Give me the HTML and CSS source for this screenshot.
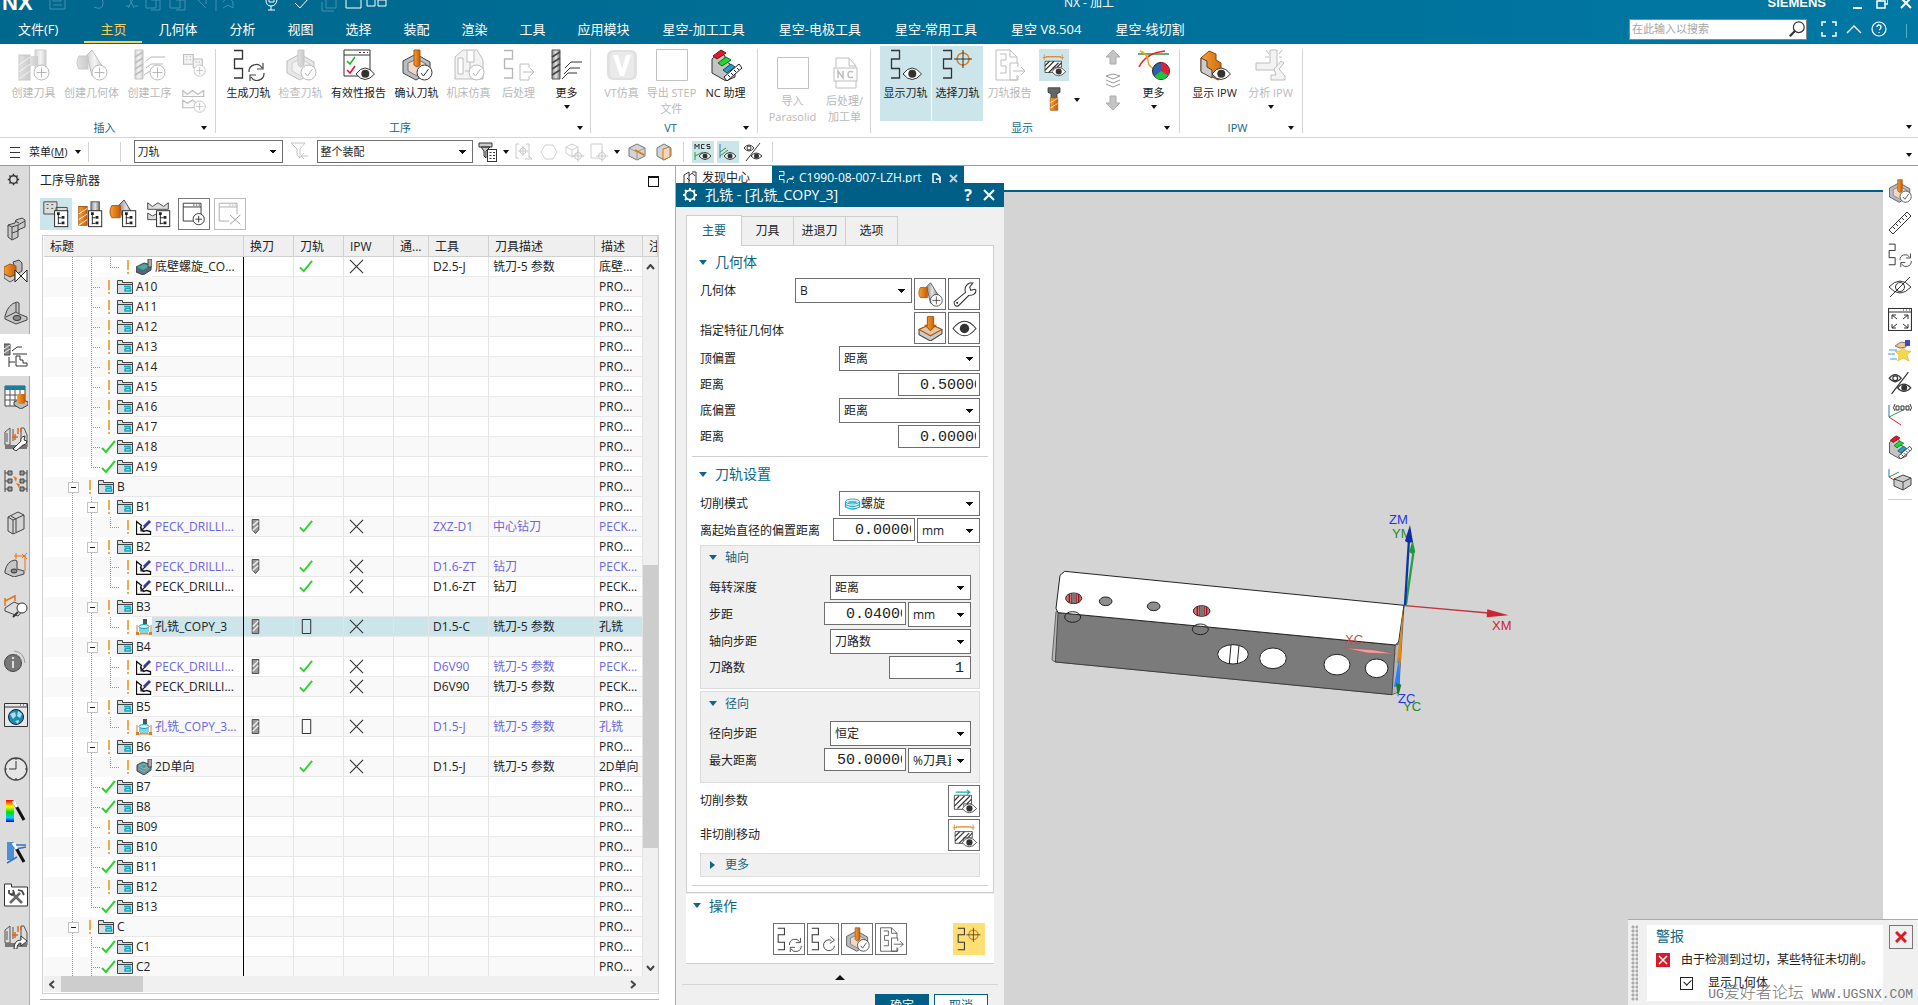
FILE: index.html
```html
<!DOCTYPE html>
<html lang="zh-CN">
<head>
<meta charset="utf-8">
<title>NX - 加工</title>
<link rel="stylesheet" href="styles.css">
</head>
<body>
<svg class="sprite" aria-hidden="true">
<defs>
<linearGradient id="steel"><stop offset="0" stop-color="#8a8a8a"/><stop offset=".5" stop-color="#e4e4e4"/><stop offset="1" stop-color="#777"/></linearGradient>
<linearGradient id="amber"><stop offset="0" stop-color="#f7a030"/><stop offset="1" stop-color="#c85c08"/></linearGradient>
<linearGradient id="rainbow" x2="0" y2="1"><stop offset="0" stop-color="red"/><stop offset=".3" stop-color="#ff0"/><stop offset=".55" stop-color="#0d0"/><stop offset=".8" stop-color="#0cf"/><stop offset="1" stop-color="#00f"/></linearGradient>
<g id="b-plus"><circle cx="23.500" cy="23.500" r="7.500" fill="#fff" stroke="#333"/><path d="M23.500 18.500v10M18.500 23.500h10" stroke="#333" fill="none"/></g>
<g id="b-check"><circle cx="23.500" cy="23.500" r="7.500" fill="#fff" stroke="#333"/><path d="M20 24l2.500 3 5-7" stroke="#333" fill="none"/></g>
<g id="b-eye"><path d="M13 25q9-12 18.500 0q-9.500 11-18.500 0z" fill="#fff" stroke="#333"/><circle cx="22.300" cy="24.800" r="4" fill="#333"/></g>
<g id="b-cycle"><path d="M16 23a7 7 0 0 1 13-4M30 14v6h-6M31 24a7 7 0 0 1-13 4M17 32v-6h6" fill="none" stroke="#444" stroke-width="1.200"/></g>
<g id="b-tree"><rect x="14.500" y="12.500" width="14" height="17" fill="#fff" stroke="#222"/><path d="M18.500 15v12M18 20h4M18 26h4" stroke="#222" fill="none"/><path d="M17 14h3v3h-3zM22 18h3v3h-3zM22 24h3v3h-3z" fill="#222"/></g>
<g id="wave"><path d="M1 1.500h8.500v8.500H1.500v9.500h8v9.500H1" fill="none" stroke="#333" stroke-width="1.300"/></g>
<g id="drill"><path d="M1 1h8v29H1z" fill="url(#steel)" stroke="#555"/><path d="M1 8l8-5M1 14l8-5M1 20l8-5M1 26l8-5" stroke="#444" stroke-width="1.500"/></g>
<g id="cone"><path d="M11 6l5-5 10 16-4 10h-6z" fill="url(#steel)" stroke="#444"/><path d="M3 7h9v13H3q-4-6 0-13z" fill="url(#amber)" stroke="#a8570f"/></g>
<g id="holebox"><path d="M2 12L15 5l14 8v10l-14 8-13-7z" fill="#b9bcc0" stroke="#444"/><path d="M7 14l9-4 9 5v6l-9 6-9-5z" fill="#f0d9c7" stroke="#777"/><path d="M13 1h6v15l-3 2-3-2z" fill="url(#amber)" stroke="#a8570f"/></g>
<g id="stairs"><path d="M2 10L10 3l5 4v5l5 3v4l5 3v6l-9 4-14-8z" fill="#c4c4c4" stroke="#333"/></g>
</defs>
<symbol id="i-tool" viewBox="0 0 32 32"><rect x="17" y="1" width="11" height="18" fill="url(#steel)" stroke="#777"/><rect x="1" y="6" width="11" height="25" fill="url(#amber)" stroke="#a8570f"/><path d="M1 16l11-8M1 23l11-8M1 30l11-8" stroke="#fff" opacity=".7"/><rect x="12" y="7" width="8" height="10" fill="url(#amber)"/><use href="#b-plus"/></symbol>
<symbol id="i-geom" viewBox="0 0 32 32"><use href="#cone"/><use href="#b-plus"/></symbol>
<symbol id="i-op" viewBox="0 0 32 32"><use href="#drill"/><path d="M12 12l5-4h14M12 19l5-4h12M10 26l6-4h12" fill="none" stroke="#333"/><use href="#b-plus"/></symbol>
<symbol id="i-prog" viewBox="0 0 32 32"><path d="M2 2h13v13H2zM15 8h12v12H15z" fill="#ddd" stroke="#444" stroke-width="1.500"/><path d="M5 5h2M10 5h2M5 9h2M10 9h2M18 12h2M22 12h2" stroke="#444" stroke-width="1.500"/><use href="#b-plus"/></symbol>
<symbol id="i-meth" viewBox="0 0 32 32"><path d="M1 2l6 5 7-5 7 5 8-5v8H1zM1 15l6 4 7-4 5 3v7H1z" fill="#eee" stroke="#444" stroke-width="1.500"/><use href="#b-plus"/></symbol>
<symbol id="i-gen" viewBox="0 0 32 32"><use href="#wave"/><use href="#b-cycle"/></symbol>
<symbol id="i-redo" viewBox="0 0 32 32"><use href="#wave"/><path d="M26 17a7 7 0 1 0 4 7M25 12l5 5-6 4" fill="none" stroke="#444" stroke-width="1.200"/></symbol>
<symbol id="i-chk" viewBox="0 0 32 32"><use href="#holebox"/><use href="#b-check"/></symbol>
<symbol id="i-report" viewBox="0 0 32 32"><path d="M1 1h26v26H1z" fill="#fff" stroke="#333"/><path d="M1 6h26M16 3.500h2M20 3.500h2M24 3.500h1" stroke="#333"/><path d="M4 12l3 3 5-7" fill="none" stroke="#18b828" stroke-width="1.500"/><path d="M4 21l3 3 5-7" fill="none" stroke="#e01038" stroke-width="1.500"/><use href="#b-eye"/></symbol>
<symbol id="i-mach" viewBox="0 0 32 32"><path d="M2 8L10 1h14l6 10v19H2z" fill="#ddd" stroke="#444"/><path d="M5 9h5v16H5zM14 2v11h7V2M17 13v8M12 22h14" fill="#fff" stroke="#444"/><use href="#b-check"/></symbol>
<symbol id="i-post" viewBox="0 0 32 32"><use href="#wave"/><path d="M17 15h9v4M26 27v4h-9V15M20 23h11l-4-4M31 23l-4 4" fill="none" stroke="#444"/></symbol>
<symbol id="i-more" viewBox="0 0 32 32"><use href="#drill"/><path d="M14 19l6-6h11M13 25l6-6h10M11 30l6-6h9" fill="none" stroke="#333"/></symbol>
<symbol id="i-vt" viewBox="0 0 32 32"><rect x="1" y="1" width="30" height="30" rx="6" fill="#a9a9a9"/><rect x="4" y="3" width="24" height="26" rx="4" fill="#c6c6c6"/><path d="M7 6h5l4 14 4-14h5l-7 21h-4z" fill="#fff"/></symbol>
<symbol id="i-blank" viewBox="0 0 32 32"><path d="M.5.500h31v31H.5z" fill="none" stroke="#555"/></symbol>
<symbol id="i-nc" viewBox="0 0 32 32"><use href="#stairs"/><path d="M3 7l8-6 5 3-9 6z" fill="#e01a2a" stroke="#7a0c15"/><path d="M8 14l8-6 5 3-9 6z" fill="#20d834" stroke="#0b6d18"/><path d="M13 21l8-6 4 3-8 6z" fill="#2a9cc4" stroke="#0c4c66"/><path d="M14 28L29 15l3 4-15 13z" fill="#fff" stroke="#222"/><path d="M18 26l2 2M21 24l2 2M24 21l2 2M27 19l2 2" stroke="#222"/></symbol>
<symbol id="i-ncdoc" viewBox="0 0 32 32"><path d="M7 10V1h13l7 8v1M7 24v7h20v-7M20 1v8h7" fill="none" stroke="#444"/><rect x="5" y="11" width="23" height="13" fill="#fff" stroke="#444"/><path d="M9 21v-7l5 7v-7M24 15q-5-2-5 2.500t5 2.500" fill="none" stroke="#444" stroke-width="1.500"/></symbol>
<symbol id="i-show" viewBox="0 0 32 32"><use href="#wave"/><use href="#b-eye"/></symbol>
<symbol id="i-pick" viewBox="0 0 32 32"><use href="#wave"/><circle cx="21" cy="10" r="6" fill="none" stroke="#d9801f" stroke-width="1.500"/><path d="M21 1v18M12 10h18" stroke="#333"/></symbol>
<symbol id="i-preport" viewBox="0 0 32 32"><path d="M2 1h14l7 7v6M23 26v5H2V1M16 1v7h7" fill="none" stroke="#444"/><path d="M6 5h6v6H7v6h5v7H6" fill="none" stroke="#444"/><path d="M16 14h8v4M24 27v4h-8V14M19 22h12l-4-4M31 22l-4 4" fill="none" stroke="#444"/></symbol>
<symbol id="i-hatch" viewBox="0 0 32 32"><path d="M5 5h20" stroke="#e0761a" stroke-width="1.500" fill="none"/><path d="M3 2v7M27 2v7M1 6h5M24 6h5" stroke="#e0761a"/><path d="M4 11h22v8H15v7H4z" fill="#fff" stroke="#333"/><path d="M4 17l6-6M4 23L16 11M9 26L22 13M20 19l6-6" stroke="#333" stroke-width="1.500"/><use href="#b-eye"/></symbol>
<symbol id="i-cutp" viewBox="0 0 32 32"><path d="M5 4h18M19 1l4 3-4 3" stroke="#1aa9a9" stroke-width="1.300" fill="none"/><path d="M3 8h22v11H15v7H3z" fill="#fff" stroke="#333"/><path d="M3 15l6-6M3 22L16 9M7 25L23 9M19 19l6-6" stroke="#333" stroke-width="1.500"/><use href="#b-eye"/></symbol>
<symbol id="i-bolt" viewBox="0 0 32 32"><path d="M8 1h16v6l-4 2v5h-8V9L8 7z" fill="#666" stroke="#333"/><path d="M11 14h10v17H11z" fill="url(#amber)" stroke="#a8570f"/><path d="M11 21l10-6M11 28l10-6" stroke="#fff"/></symbol>
<symbol id="i-up" viewBox="0 0 16 16"><path d="M8 1l7 7h-4v7H5V8H1z" fill="#c4c4c4" stroke="#aaa"/></symbol>
<symbol id="i-down" viewBox="0 0 16 16"><path d="M8 15L1 8h4V1h6v7h4z" fill="#c4c4c4" stroke="#aaa"/></symbol>
<symbol id="i-layers" viewBox="0 0 16 16"><path d="M1 4l7-2 7 2-7 3zM1 8l7 3 7-3M1 12l7 3 7-3" fill="none" stroke="#999"/></symbol>
<symbol id="i-chart" viewBox="0 0 32 32"><path d="M0 5h31" stroke="#2c9a3a" stroke-width="1.500"/><path d="M1 18Q8 4 27 2" stroke="#e02a2a" stroke-width="1.500" fill="none"/><path d="M2 2q8 3 8 10t12 10" stroke="#f0a020" stroke-width="1.500" fill="none"/><circle cx="23" cy="22" r="8.500" fill="#2a62a8" stroke="#222"/><path d="M23 22V13.500a8.500 8.500 0 0 1 7 13z" fill="#e02038"/><path d="M23 22l7 4.500a8.500 8.500 0 0 1-13.500 1z" fill="#1fc43c"/></symbol>
<symbol id="i-ipw" viewBox="0 0 32 32"><path d="M2 9l8-7 7 3v6l5 3v5l6 3v4l-9 5-17-9z" fill="url(#amber)" stroke="#8a4508"/><path d="M2 9l6 3v6l5 3v8L2 23z" fill="#ccc" stroke="#444"/><use href="#b-eye"/></symbol>
<symbol id="i-aipw" viewBox="0 0 32 32"><path d="M1 14h14V1h7v20H1zM11 1l3 4M27 1l-3 4M10 8h4M27 8h-3" fill="#ddd" stroke="#444"/><path d="M26 12l-7 8 2 6h-5v5h14v-4l-6-7 5-6z" fill="#ddd" stroke="#444"/></symbol>
<symbol id="i-funnel" viewBox="0 0 20 20"><path d="M1 1h14l-5 6v9l-3-3V7z" fill="none" stroke="#555"/><path d="M11 14h7M14 11l-3 3 3 3" fill="none" stroke="#555"/></symbol>
<symbol id="i-funnel2" viewBox="0 0 20 20"><path d="M1 1h13v4H1zM3 5h9l-4 4v7l-2-2V9z" fill="#ccc" stroke="#333"/><rect x="9.500" y="7.500" width="9" height="12" fill="#fff" stroke="#333"/><path d="M11.500 10.500h2M11.500 13.500h2M11.500 16.500h2M15 10.500h2M15 13.500h2M15 16.500h2" stroke="#333"/></symbol>
<symbol id="i-bracket" viewBox="0 0 20 20"><path d="M5 2H2v14h3M12 2h3v14M9 4v10M4 9h10M11 17h7M15 14l3 3" fill="none" stroke="#666"/><circle cx="9" cy="9" r="3" fill="none" stroke="#666"/></symbol>
<symbol id="i-hex" viewBox="0 0 20 20"><path d="M6 3h8l4 7-4 7H6l-4-7z" fill="none" stroke="#777"/></symbol>
<symbol id="i-cubet" viewBox="0 0 20 20"><path d="M2 5l6-3 6 3v6l-6 4-6-4zM2 5l6 3 6-3M8 8v6" fill="none" stroke="#777"/><circle cx="14" cy="14" r="3.500" fill="none" stroke="#666"/><path d="M14 8v12M8 14h12" stroke="#666"/></symbol>
<symbol id="i-rect" viewBox="0 0 20 20"><path d="M2 2h11v14H2z" fill="none" stroke="#777"/><circle cx="13" cy="14" r="3.500" fill="#fff" stroke="#666"/><path d="M13 8v12M7 14h12" stroke="#666"/></symbol>
<symbol id="i-box1" viewBox="0 0 20 20"><path d="M2 6l8-4 8 4v8l-8 4-8-4z" fill="#d4d4d4" stroke="#777"/><path d="M2 6l8 4 8-4M10 10v8" fill="none" stroke="#999"/><path d="M8 8l9 5" stroke="#e0761a" stroke-width="2"/></symbol>
<symbol id="i-box2" viewBox="0 0 20 20"><path d="M3 6l7-4 7 4v8l-7 4-7-4z" fill="#d4d4d4" stroke="#777"/><path d="M9 7l7-2v10l-7 3z" fill="#f5d7bb" stroke="#d9741a"/></symbol>
<symbol id="i-mcs" viewBox="0 0 20 20"><path d="M2 7V2l2 3 2-3v5M11.500 2.500h-3v4h3M17 2.500h-3v2h3v2h-3" fill="none" stroke="#333"/><path d="M2 10v8M2 14l8-4" stroke="#2c9a3a" fill="none"/><path d="M6 14q6-7 12 0q-6 7-12 0z" fill="#fff" stroke="#333"/><circle cx="12" cy="14" r="2.500" fill="#333"/></symbol>
<symbol id="i-wcs" viewBox="0 0 20 20"><path d="M2 2v14" stroke="#3b7fc4"/><path d="M2 14l8-6M2 10l6-4" stroke="#2c9a3a" fill="none"/><path d="M6 14q6-7 12 0q-6 7-12 0z" fill="#fff" stroke="#333"/><circle cx="12" cy="14" r="2.500" fill="#333"/></symbol>
<symbol id="i-eyes" viewBox="0 0 20 20"><path d="M1 6q5-6 10 0q-5 6-10 0zM17 1L3 19" fill="none" stroke="#333"/><circle cx="6" cy="6" r="2" fill="none" stroke="#333"/><path d="M8 14q5-6 11 0q-6 6-11 0z" fill="#fff" stroke="#333"/><circle cx="13.500" cy="14" r="2.500" fill="#333"/></symbol>
<symbol id="n-prog" viewBox="0 0 32 32"><path d="M3 3h14v13H3zM16 9h12v12H16z" fill="#ddd" stroke="#444"/><path d="M6 6h2M11 6h2M6 10h2M11 10h2" stroke="#444"/><use href="#b-tree"/></symbol>
<symbol id="n-tool" viewBox="0 0 32 32"><rect x="17" y="3" width="9" height="16" fill="url(#steel)" stroke="#555"/><rect x="4" y="8" width="9" height="20" fill="url(#amber)" stroke="#a8570f"/><path d="M4 16l9-6M4 22l9-6M4 28l9-6" stroke="#fff"/><use href="#b-tree"/></symbol>
<symbol id="n-geom" viewBox="0 0 32 32"><use href="#cone"/><use href="#b-tree"/></symbol>
<symbol id="n-meth" viewBox="0 0 32 32"><path d="M5 4l5 4 6-4 6 4 5-4v7H5zM5 15l5 3 6-3v7H5z" fill="#ddd" stroke="#444"/><use href="#b-tree"/></symbol>
<symbol id="n-new" viewBox="0 0 32 32"><path d="M4.500 4.500h19v19h-19zM4.500 8.500h19M15 6.500h1.500M18 6.500h1.500M21 6.500h1.500" fill="none" stroke="#333"/><circle cx="21" cy="21.500" r="6" fill="#fff" stroke="#333"/><path d="M21 18v7M17.500 21.500h7" stroke="#333"/></symbol>
<symbol id="n-del" viewBox="0 0 32 32"><path d="M4.500 4.500h19v19h-19zM4.500 8.500h19M15 6.500h1.500M18 6.500h1.500M21 6.500h1.500" fill="none" stroke="#aaa"/><path d="M15 16h12v12H15z" fill="#fff"/><path d="M16 17l11 10M27 17L16 27" stroke="#999"/></symbol>
<symbol id="warn" viewBox="0 0 16 16"><path d="M8 1v10M8 13v2" stroke="#f0aa48" stroke-width="2"/></symbol>
<symbol id="ok" viewBox="0 0 16 16"><path d="M1 9l4 4L14 2" fill="none" stroke="#2fd02f" stroke-width="2"/></symbol>
<symbol id="no" viewBox="0 0 16 16"><path d="M1 1l14 14M15 1L1 15" fill="none" stroke="#333" stroke-width="1.200"/></symbol>
<symbol id="none" viewBox="0 0 16 16"><path d="M3.500.500h9v15h-9z" fill="none" stroke="#222"/></symbol>
<symbol id="bit" viewBox="0 0 16 16"><path d="M4.500.500h7v15h-7z" fill="#999" stroke="#444"/><path d="M5 8l6-6M5 13l6-6" stroke="#eee" stroke-width="1.500"/></symbol>
<symbol id="bit2" viewBox="0 0 16 16"><path d="M4.500.500h7v11L8 15.500l-3.500-4z" fill="#999" stroke="#444"/><path d="M5 7l6-5M5 12l6-5" stroke="#eee" stroke-width="1.500"/></symbol>
<symbol id="fold" viewBox="0 0 16 16"><path d="M.5 1.500h5v2h10v11H.5z" fill="#d5dde2" stroke="#444"/><path d="M1 5.500h14" stroke="#444"/><path d="M7 7.500h6v2H8M8 9.500v2.500h5.500v-2" fill="none" stroke="#12a5bb" stroke-width="1.500"/></symbol>
<symbol id="peck" viewBox="0 0 16 16"><path d="M.5 2.500v13h14v-3l-4-1-3 1-3-4 1-2z" fill="#fff" stroke="#111" stroke-width="1.300"/><path d="M8 8l6-6" stroke="#3a3a98" stroke-width="3"/><path d="M5 8v4h4M5 12l4-4" fill="none" stroke="#223" stroke-width="1.200"/></symbol>
<symbol id="mill" viewBox="0 0 16 16"><path d="M1 6v9h14V6" fill="#fff" stroke="#e07c28"/><path d="M0 13h3v3H0zM13 13h3v3h-3z" fill="#e07c28"/><path d="M7 0h4v5H7z" fill="#555"/><ellipse cx="8" cy="7.500" rx="5" ry="2" fill="#d8f6f9" stroke="#12a5bb"/><path d="M3 10h10M3 12h10M4 14h8" stroke="#12a5bb"/></symbol>
<symbol id="floor" viewBox="0 0 16 16"><path d="M0 8l8-4 7 2v5l-8 5-7-3z" fill="#567" stroke="#444"/><path d="M1 8l7-3 6 2-7 4z" fill="#3eb0a0"/><path d="M12 0h4v8h-4z" fill="#aaa" stroke="#444"/></symbol>
<symbol id="plan" viewBox="0 0 16 16"><path d="M1 6l6-3 8 3v5l-7 5-7-4z" fill="#6b8b96" stroke="#444"/><path d="M3 7l5-2 4 2-4 3zM3 10l5 3 5-4" fill="none" stroke="#4fd0d8"/><path d="M8 10l4-2" stroke="#e8a05c"/><path d="M12 0h4v8h-4z" fill="#aaa" stroke="#444"/></symbol>
<symbol id="gear" viewBox="0 0 16 16"><circle cx="8" cy="8" r="4.700" fill="none" stroke="currentColor" stroke-width="1.800"/><path d="M8 1v2M8 13v2M1 8h2M13 8h2M3 3l1.500 1.500M11.500 11.500L13 13M13 3l-1.500 1.500M4.500 11.500L3 13" stroke="currentColor" stroke-width="1.800"/></symbol>
<symbol id="s-asm" viewBox="0 0 24 24"><path d="M4 8l7-2 1-3 6-2 3 2v7l-7 3v7l-6 3-4-3z" fill="#c9c9c9" stroke="#444"/><path d="M4 8l4 2v13M8 10l6-2 7-4M8 16l6-2M14 8v6M11 4l4 2" fill="none" stroke="#444"/></symbol>
<symbol id="s-cons" viewBox="0 0 24 24"><path d="M9 3l6-2 3 3v8l-5 3z" fill="#bbb" stroke="#444"/><path d="M0 8l6-3 6 2v8l-6 3-6-3z" fill="url(#amber)" stroke="#a8570f"/><path d="M0 15l6 3 5-2v4l-5 3-6-4z" fill="#ccc" stroke="#555"/><path d="M11 11l12 12V11L11 23z" fill="#fff" stroke="#222"/></symbol>
<symbol id="s-part" viewBox="0 0 24 24"><path d="M1 15Q4 3 13 1l2 1v11l8 3v3l-11 4-11-5z" fill="#c6c6c6" stroke="#444"/><path d="M12 2v9l-10 5M15 13l-3-2" fill="none" stroke="#444"/><ellipse cx="13" cy="17" rx="4" ry="2.500" fill="#888" stroke="#333"/></symbol>
<symbol id="s-opnav" viewBox="0 0 24 24"><path d="M0 1h6v11H0z" fill="#888" stroke="#444"/><path d="M0 6l6-4M0 10l6-4" stroke="#eee"/><path d="M8 8l5-4h5M9 11h14M5 14v10M5 19h6M12 23V13h4v4h3v3h4v3z" fill="none" stroke="#333"/></symbol>
<symbol id="s-feat" viewBox="0 0 24 24"><path d="M1 1h20v20H1z" fill="#fff" stroke="#444"/><path d="M1 1h20v4H1z" fill="#1a7f9e"/><path d="M1 10h20M1 15h20M6 5v16M11 5v16M16 5v16" stroke="#555"/><path d="M10 17l7-3 7 3v3l-7 4-7-4z" fill="#bbb" stroke="#444"/><path d="M13 9h8v9q-4 2-8 0z" fill="url(#amber)"/></symbol>
<symbol id="s-mtool" viewBox="0 0 24 24"><path d="M1 5l5-4v17H1zM17 1h3l3 7v12h-6z" fill="#ddd" stroke="#555"/><path d="M1 18h22v4H1z" fill="#777"/><path d="M3 6v9M9 2v12" stroke="#555"/><path d="M8 10h6M11 7v6M14 1v6M17 1v4" stroke="#e0661a" stroke-width="1.500"/><path d="M9 22l8-8q-1-4 4-5l-1 4 3 1q0 4-4 4l-7 6z" fill="#fff" stroke="#333"/></symbol>
<symbol id="s-dep" viewBox="0 0 24 24"><path d="M1 1v22M1 4h5M1 12h5M1 20h5M23 1v22M23 4h-5M23 12h-5M23 20h-5" stroke="#444"/><path d="M4 2h4v4H4zM4 10h4v4H4zM4 18h4v4H4zM16 2h4v4h-4zM16 10h4v4h-4zM16 18h4v4h-4z" fill="#999" stroke="#444"/><path d="M9 7l4 2-1 4zM12 14l4 1-1 4z" fill="#e0761a"/></symbol>
<symbol id="s-book" viewBox="0 0 24 24"><path d="M4 6l10-5 6 3v14L9 23l-5-3z" fill="#d4d4d4" stroke="#444"/><path d="M4 6l5 3v14M9 9l11-5M7 5l5 3v13" fill="none" stroke="#444"/></symbol>
<symbol id="s-pmi" viewBox="0 0 24 24"><path d="M1 18Q3 8 11 7l2 1v8l7 2v3l-10 3-9-4z" fill="#c6c6c6" stroke="#444"/><ellipse cx="10" cy="18" rx="3" ry="2" fill="#888" stroke="#333"/><path d="M10 3h12M21 3v15M12 0v6M18 1l5 5M23 0l-5 5" stroke="#e0761a" fill="none"/></symbol>
<symbol id="s-insp" viewBox="0 0 24 24"><path d="M1 13l9-6 12 5-8 9-13-5z" fill="#ddd" stroke="#444"/><path d="M1 6L11 1M1 3v8M11 0v6" stroke="#e0761a" stroke-width="1.500"/><circle cx="18" cy="13" r="5" fill="#fff" stroke="#333"/><path d="M14 17l-5 5" stroke="#333" stroke-width="2"/></symbol>
<symbol id="s-info" viewBox="0 0 24 24"><circle cx="9" cy="14" r="8.500" fill="#777" stroke="#444"/><path d="M9 12v7M9 8v2" stroke="#fff" stroke-width="1.500"/><path d="M10 2q10 1 11 12M12 5q5 2 6 8" fill="none" stroke="#999"/></symbol>
<symbol id="s-web" viewBox="0 0 24 24"><path d="M.5.500h23v23H.5z" fill="#e8e8e8" stroke="#333"/><path d="M0 4h24M16 2h1M19 2h1M22 2h1" stroke="#333"/><circle cx="12" cy="14" r="7.500" fill="#2188a8" stroke="#125"/><path d="M6 11l5-2 1 4-3 3zM14 8l4 3-2 4-3-2zM11 18l4-1-1 4z" fill="#a9e0ee"/></symbol>
<symbol id="s-clock" viewBox="0 0 24 24"><circle cx="12" cy="12" r="11" fill="#e6e6e6" stroke="#444" stroke-width="1.300"/><path d="M12 4v8H5M12 1v2M12 21v2M1 12h2M21 12h2" fill="none" stroke="#333"/></symbol>
<symbol id="s-rain" viewBox="0 0 24 24"><path d="M2 1h8v22H2z" fill="url(#rainbow)"/><path d="M11 5l9 16" stroke="#111" stroke-width="3"/><path d="M9 2l4 6" stroke="#fff" stroke-width="3"/></symbol>
<symbol id="s-wiz" viewBox="0 0 24 24"><path d="M3 1h7v18H3z" fill="#4a90d8"/><path d="M12 4h10M12 8l10-2M3 22l10-6" stroke="#3672c0" stroke-width="1.500"/><path d="M11 5l9 16" stroke="#111" stroke-width="3"/><path d="M9 2l4 6" stroke="#fff" stroke-width="3"/></symbol>
<symbol id="s-tools" viewBox="0 0 24 24"><path d="M.5 4V1h7v3h16v19H.5z" fill="#fff" stroke="#333"/><path d="M6 20L16 10M8 10l10 10" stroke="#666" stroke-width="2.500"/><path d="M5 7v3l3 2 2-2-1-3M14 7l4 1 2 4" stroke="#444" stroke-width="1.800" fill="none"/></symbol>
<symbol id="s-mout" viewBox="0 0 24 24"><path d="M1 5l5-4v17H1zM17 1h3l3 7v12h-6z" fill="#ddd" stroke="#555"/><path d="M1 18h22v4H1z" fill="#777"/><path d="M3 6v9M9 2v12" stroke="#555"/><path d="M8 10h6M11 7v6M14 1v6M17 1v4" stroke="#e0661a" stroke-width="1.500"/><path d="M10 24q0-9 7-9v-4l6 5-6 5v-3q-4 0-4 6z" fill="#fff" stroke="#333"/></symbol>
<symbol id="wrench" viewBox="0 0 24 24"><path d="M2 19L13 10q-2-6 4-9l3 0-3 4 1 3 4-1 1 1q0 5-7 5L6 23q-4 1-4-4z" fill="#fff" stroke="#333"/><circle cx="5" cy="20" r="1" fill="#333"/></symbol>
<symbol id="eye" viewBox="0 0 24 24"><path d="M1 12q11-14 22 0q-11 14-22 0z" fill="#fff" stroke="#333"/><circle cx="12" cy="12" r="4.500" fill="#333"/></symbol>
<symbol id="hole" viewBox="0 0 24 24"><path d="M1 13l11-5 11 5v4l-11 7-11-6z" fill="#ccc" stroke="#444"/><path d="M1 13l11-5 11 5-11 6z" fill="#e6c4a4" stroke="#a8570f"/><path d="M9 1q3-2 6 0v8h2l-5 5-5-5h2z" fill="url(#amber)" stroke="#a8570f"/></symbol>
<symbol id="ruler" viewBox="0 0 24 24"><path d="M1 19L19 1l4 4L5 23z" fill="#fff" stroke="#333"/><path d="M5 16l2 2M8 13l2 2M11 10l2 2M14 7l2 2M17 4l2 2" stroke="#333"/></symbol>
<symbol id="noeye" viewBox="0 0 24 24"><path d="M1 12q11-12 22 0q-11 12-22 0zM22 2L2 22" fill="none" stroke="#333"/><circle cx="12" cy="12" r="4.500" fill="none" stroke="#333"/></symbol>
<symbol id="fit" viewBox="0 0 24 24"><path d="M.5 1.500h23v22H.5zM0 5h24M15 3h1M18 3h1M21 3h1" fill="none" stroke="#333" stroke-width="1.200"/><path d="M4 12V8h4M4 8l5 4M20 12V8h-4M20 8l-5 4M4 17v4h4M4 21l5-4M20 17v4h-4M20 21l-5-4" fill="none" stroke="#333"/></symbol>
<symbol id="star" viewBox="0 0 24 24"><path d="M15 8l3 4 5 0-4 4 2 6-6-3-5 3 1-6-4-4h5z" fill="#f8d848" stroke="#c9a020" stroke-width=".5"/><path d="M7 7l6-4 5 1v4l-6 1z" fill="#f0c8a0" stroke="#876"/><path d="M17 1h5v6h-5z" fill="#3c4cc0"/><path d="M1 11h8M0 15h7M2 20h7" stroke="#3c9ce8"/></symbol>
<symbol id="csys" viewBox="0 0 24 24"><path d="M1 2v12" stroke="#2a72c8"/><path d="M1 14l14-7" stroke="#2c9a3a"/><path d="M1 14l12 8" stroke="#e02020"/><path d="M7 1q-3 4 0 7M8 3h3v4H8zM13 3h3v4h-3zM18 3h3v4h-3zM22 1q3 4 0 7" fill="none" stroke="#333"/></symbol>
<symbol id="csysbox" viewBox="0 0 24 24"><path d="M1 2v8" stroke="#2a72c8"/><path d="M1 10l10-5" stroke="#2c9a3a"/><path d="M1 10l12 7" stroke="#e02020"/><path d="M6 12l9-4 8 3v7l-8 5-9-4z" fill="#ccc" stroke="#444"/><path d="M6 12l9 3 8-4M15 15v8" fill="none" stroke="#444"/></symbol>
<symbol id="mag" viewBox="0 0 20 20"><circle cx="12" cy="8" r="6" fill="none" stroke="#333" stroke-width="1.300"/><path d="M8 12l-6 6" stroke="#333" stroke-width="2.500"/></symbol>
<symbol id="spiral" viewBox="0 0 16 12"><ellipse cx="8" cy="3.500" rx="7" ry="2.500" fill="#d8f6fb" stroke="#22a8cc"/><path d="M1 4v5q7 4 14 0V4M1 6.500q7 4 14 0M4 4h8" fill="none" stroke="#22a8cc" stroke-width="1.300"/></symbol>
</svg>

<div class="app">
<header class="top">
  <div class="titlebar">
    <b class="nx">NX</b>
    <svg class="qat" width="400" height="20" fill="none" stroke="#4390b3"><path d="M2 3h15v13H2zM5 3v5h8V3M5 12h9M47 4q8-2 8 6t-9 4M80 3l6 12M87 3L80 15M78 13h4M86 13h4M98 3h10v12H98zM103 7h9v10h-9M122 3h10v12h-10zM128 7h9v10h-9M146 3h12v8M148 5l10 10M168-2v20M175 9l5-6 5 6v6l-5-3-5 3M278 5h10v10h-10zM274 9v9h12"/><g stroke="#fff"><path d="M221 1h5v8h-5zM218 7q0 6 5 6t6-6M223 13v4M220 17h7M247 10l5 5 9-10M298 0h15v15h-15zM319 3h8v10h-8zM330 7h8v6h-8z"/><path d="M197 4h4l-2 2zM345 4h4l-2 2zM357 4h5l-2 3z" fill="#fff"/></g></svg>
    <span class="apptitle">NX - 加工</span>
    <b class="brand">SIEMENS</b>
    <button class="win" aria-label="最小化"><svg width="12" height="12"><path d="M1 11h9" stroke="#fff" stroke-width="2"/></svg></button>
    <button class="win" aria-label="还原"><svg width="12" height="12"><path d="M1 4h8v7H1zM4 4V1h8v6H9" fill="none" stroke="#fff" stroke-width="1.500"/></svg></button>
    <button class="win" aria-label="关闭"><svg width="12" height="12"><path d="M1 1l10 10M11 1L1 11" stroke="#fff" stroke-width="2"/></svg></button>
  </div>
  <nav class="menu">
    <a class="file" href="#">文件(F)</a><a class="on" href="#">主页</a><a href="#">几何体</a><a href="#">分析</a><a href="#">视图</a><a href="#">选择</a><a href="#">装配</a><a href="#">渲染</a><a href="#">工具</a><a href="#">应用模块</a><a class="ext" href="#">星空-加工工具</a><a class="ext" href="#">星空-电极工具</a><a class="ext" href="#">星空-常用工具</a><a class="ext" href="#">星空 V8.504</a><a class="ext" href="#">星空-线切割</a>
    <div class="find"><input type="text" aria-label="搜索" placeholder="在此输入以搜索"><svg width="18" height="18"><use href="#mag"/></svg></div>
    <button class="mb" aria-label="全屏"><svg width="16" height="16"><path d="M1 5V1h4M11 1h4v4M15 11v4h-4M5 15H1v-4" fill="none" stroke="#fff" stroke-width="1.500"/></svg></button>
    <button class="mb" aria-label="收起功能区"><svg width="16" height="16"><path d="M1 12l7-7 7 7" fill="none" stroke="#fff" stroke-width="1.300"/></svg></button>
    <button class="mb" aria-label="帮助"><svg width="16" height="16"><circle cx="8" cy="8" r="7" fill="none" stroke="#fff" stroke-width="1.200"/><path d="M6 6q0-2 2-2t2 2-2 3M8 11v1" fill="none" stroke="#fff" stroke-width="1.300"/></svg></button>
    <span class="bang"></span>
  </nav>
</header>

<section class="ribbon" aria-label="功能区">
  <div class="group">
    <div class="tools">
      <button class="rb off"><svg><use href="#i-tool"/></svg>创建刀具</button>
      <button class="rb wide off"><svg><use href="#i-geom"/></svg>创建几何体</button>
      <button class="rb off"><svg><use href="#i-op"/></svg>创建工序</button>
      <div class="stack off"><button aria-label="创建程序"><svg><use href="#i-prog"/></svg></button><button aria-label="创建方法"><svg><use href="#i-meth"/></svg></button></div>
    </div>
    <div class="cap"><span>插入</span><i class="dn"></i></div>
  </div>
  <div class="group">
    <div class="tools">
      <button class="rb"><svg><use href="#i-gen"/></svg>生成刀轨</button>
      <button class="rb off"><svg><use href="#i-chk"/></svg>检查刀轨</button>
      <button class="rb wide"><svg><use href="#i-report"/></svg>有效性报告</button>
      <button class="rb"><svg><use href="#i-chk"/></svg>确认刀轨</button>
      <button class="rb off"><svg><use href="#i-mach"/></svg>机床仿真</button>
      <button class="rb slim off"><svg><use href="#i-post"/></svg>后处理</button>
      <button class="rb slim"><svg><use href="#i-more"/></svg>更多<i class="dn"></i></button>
    </div>
    <div class="cap"><span>工序</span><i class="dn"></i></div>
  </div>
  <div class="group">
    <div class="tools">
      <button class="rb slim off"><svg><use href="#i-vt"/></svg>VT仿真</button>
      <button class="rb off"><svg><use href="#i-blank"/></svg>导出 STEP<br>文件</button>
      <button class="rb mid"><svg><use href="#i-nc"/></svg>NC 助理</button>
    </div>
    <div class="cap"><span>VT</span><i class="dn"></i></div>
  </div>
  <div class="group">
    <div class="tools low">
      <button class="rb mid off"><svg><use href="#i-blank"/></svg>导入<br>Parasolid</button>
      <button class="rb slim off"><svg><use href="#i-ncdoc"/></svg>后处理/<br>加工单</button>
    </div>
  </div>
  <div class="group">
    <div class="tools">
      <button class="rb lit"><svg><use href="#i-show"/></svg>显示刀轨</button>
      <button class="rb lit"><svg><use href="#i-pick"/></svg>选择刀轨</button>
      <button class="rb off"><svg><use href="#i-preport"/></svg>刀轨报告</button>
      <div class="stack duo"><button class="lit" aria-label="显示切削"><svg><use href="#i-hatch"/></svg></button><button aria-label="刀具显示"><svg><use href="#i-bolt"/></svg></button></div>
      <i class="dn aside"></i>
      <div class="stack tri"><button aria-label="上移"><svg><use href="#i-up"/></svg></button><button aria-label="层"><svg><use href="#i-layers"/></svg></button><button aria-label="下移"><svg><use href="#i-down"/></svg></button></div>
      <button class="rb slim"><svg><use href="#i-chart"/></svg>更多<i class="dn"></i></button>
    </div>
    <div class="cap"><span>显示</span><i class="dn"></i></div>
  </div>
  <div class="group">
    <div class="tools">
      <button class="rb mid"><svg><use href="#i-ipw"/></svg>显示 IPW</button>
      <button class="rb mid off"><svg><use href="#i-aipw"/></svg>分析 IPW<i class="dn"></i></button>
    </div>
    <div class="cap"><span>IPW</span><i class="dn"></i></div>
  </div>
  <i class="dn end"></i>
</section>

<section class="selbar" aria-label="选择条">
  <button class="mainmenu"><svg width="12" height="12"><path d="M1 1.500h10M1 6.500h10M1 11.500h10" stroke="#333"/></svg><span>菜单(<u>M</u>)</span><i class="dn"></i></button>
  <i class="vr"></i><i class="vr far"></i>
  <select class="box b1" aria-label="类型过滤器"><option>刀轨</option></select>
  <button class="tb off wide" aria-label="重置过滤器"><svg><use href="#i-funnel"/></svg></button>
  <select class="box b2" aria-label="选择范围"><option>整个装配</option></select>
  <button class="tb" aria-label="常规过滤器"><svg><use href="#i-funnel2"/></svg></button><i class="dn"></i>
  <button class="tb off" aria-label="捕捉"><svg><use href="#i-bracket"/></svg></button>
  <button class="tb off" aria-label="多边形"><svg><use href="#i-hex"/></svg></button>
  <button class="tb off" aria-label="体"><svg><use href="#i-cubet"/></svg></button>
  <button class="tb off" aria-label="矩形"><svg><use href="#i-rect"/></svg></button><i class="dn"></i>
  <button class="tb wide" aria-label="边"><svg><use href="#i-box1"/></svg></button>
  <button class="tb" aria-label="面"><svg><use href="#i-box2"/></svg></button>
  <i class="vr mid"></i>
  <button class="tb lit" aria-label="显示 MCS"><svg><use href="#i-mcs"/></svg></button>
  <button class="tb lit" aria-label="显示 WCS"><svg><use href="#i-wcs"/></svg></button>
  <button class="tb" aria-label="显示隐藏"><svg><use href="#i-eyes"/></svg></button>
  <i class="vr mid"></i>
  <i class="dn end"></i>
</section>

<main class="work">
  <nav class="rail" aria-label="资源条">
    <button class="first" aria-label="设置"><svg><use href="#gear"/></svg></button>
    <button aria-label="装配导航器"><svg><use href="#s-asm"/></svg></button>
    <button aria-label="约束导航器"><svg><use href="#s-cons"/></svg></button>
    <button aria-label="部件导航器"><svg><use href="#s-part"/></svg></button>
    <button class="on" aria-label="工序导航器"><svg><use href="#s-opnav"/></svg></button>
    <button aria-label="特征导航器"><svg><use href="#s-feat"/></svg></button>
    <button aria-label="机床导航器"><svg><use href="#s-mtool"/></svg></button>
    <button aria-label="依赖"><svg><use href="#s-dep"/></svg></button>
    <button aria-label="重用库"><svg><use href="#s-book"/></svg></button>
    <button aria-label="PMI"><svg><use href="#s-pmi"/></svg></button>
    <button aria-label="检测"><svg><use href="#s-insp"/></svg></button>
    <button class="sp" aria-label="信息"><svg><use href="#s-info"/></svg></button>
    <button class="sp" aria-label="Web 浏览器"><svg><use href="#s-web"/></svg></button>
    <button class="sp" aria-label="历史记录"><svg><use href="#s-clock"/></svg></button>
    <button aria-label="可视化"><svg><use href="#s-rain"/></svg></button>
    <button aria-label="加工向导"><svg><use href="#s-wiz"/></svg></button>
    <button aria-label="工具箱"><svg><use href="#s-tools"/></svg></button>
    <button aria-label="机床输出"><svg><use href="#s-mout"/></svg></button>
  </nav>

  <section class="navpanel">
    <header><h2>工序导航器</h2><button aria-label="最大化"></button></header>
    <div class="navtools">
      <button class="lit" aria-label="程序顺序视图"><svg><use href="#n-prog"/></svg></button>
      <button aria-label="机床视图"><svg><use href="#n-tool"/></svg></button>
      <button aria-label="几何视图"><svg><use href="#n-geom"/></svg></button>
      <button aria-label="加工方法视图"><svg><use href="#n-meth"/></svg></button>
      <button class="framed" aria-label="新建"><svg><use href="#n-new"/></svg></button>
      <button class="framed pale" aria-label="删除"><svg><use href="#n-del"/></svg></button>
    </div>
    <div class="frame">
      <div class="rows">
      <table>
        <colgroup><col class="c200"><col class="c50"><col class="c50"><col class="c50"><col class="c35"><col class="c60"><col class="c106"><col class="c48"><col class="c16"></colgroup>
        <thead><tr><th>标题</th><th>换刀</th><th>刀轨</th><th>IPW</th><th>通...</th><th>工具</th><th>刀具描述</th><th>描述</th><th>注</th></tr></thead>
        <tbody>
        <tr><td><div class="node"><i class="v"></i><i class="v"></i><i class="l"></i><svg><use href="#warn"/></svg><svg><use href="#floor"/></svg><span>底壁螺旋_CO...</span></div></td><td></td><td><svg><use href="#ok"/></svg></td><td><svg><use href="#no"/></svg></td><td></td><td>D2.5-J</td><td>铣刀-5 参数</td><td>底壁...</td><td></td></tr>
        <tr><td><div class="node"><i class="v"></i><i class="t"></i><svg><use href="#warn"/></svg><svg><use href="#fold"/></svg><span>A10</span></div></td><td></td><td></td><td></td><td></td><td></td><td></td><td>PRO...</td><td></td></tr>
        <tr><td><div class="node"><i class="v"></i><i class="t"></i><svg><use href="#warn"/></svg><svg><use href="#fold"/></svg><span>A11</span></div></td><td></td><td></td><td></td><td></td><td></td><td></td><td>PRO...</td><td></td></tr>
        <tr><td><div class="node"><i class="v"></i><i class="t"></i><svg><use href="#warn"/></svg><svg><use href="#fold"/></svg><span>A12</span></div></td><td></td><td></td><td></td><td></td><td></td><td></td><td>PRO...</td><td></td></tr>
        <tr><td><div class="node"><i class="v"></i><i class="t"></i><svg><use href="#warn"/></svg><svg><use href="#fold"/></svg><span>A13</span></div></td><td></td><td></td><td></td><td></td><td></td><td></td><td>PRO...</td><td></td></tr>
        <tr><td><div class="node"><i class="v"></i><i class="t"></i><svg><use href="#warn"/></svg><svg><use href="#fold"/></svg><span>A14</span></div></td><td></td><td></td><td></td><td></td><td></td><td></td><td>PRO...</td><td></td></tr>
        <tr><td><div class="node"><i class="v"></i><i class="t"></i><svg><use href="#warn"/></svg><svg><use href="#fold"/></svg><span>A15</span></div></td><td></td><td></td><td></td><td></td><td></td><td></td><td>PRO...</td><td></td></tr>
        <tr><td><div class="node"><i class="v"></i><i class="t"></i><svg><use href="#warn"/></svg><svg><use href="#fold"/></svg><span>A16</span></div></td><td></td><td></td><td></td><td></td><td></td><td></td><td>PRO...</td><td></td></tr>
        <tr><td><div class="node"><i class="v"></i><i class="t"></i><svg><use href="#warn"/></svg><svg><use href="#fold"/></svg><span>A17</span></div></td><td></td><td></td><td></td><td></td><td></td><td></td><td>PRO...</td><td></td></tr>
        <tr><td><div class="node"><i class="v"></i><i class="t"></i><svg><use href="#ok"/></svg><svg><use href="#fold"/></svg><span>A18</span></div></td><td></td><td></td><td></td><td></td><td></td><td></td><td>PRO...</td><td></td></tr>
        <tr><td><div class="node"><i class="v"></i><i class="l"></i><svg><use href="#ok"/></svg><svg><use href="#fold"/></svg><span>A19</span></div></td><td></td><td></td><td></td><td></td><td></td><td></td><td>PRO...</td><td></td></tr>
        <tr><td><div class="node"><button class="m" aria-label="折叠 B"></button><svg><use href="#warn"/></svg><svg><use href="#fold"/></svg><span>B</span></div></td><td></td><td></td><td></td><td></td><td></td><td></td><td>PRO...</td><td></td></tr>
        <tr><td><div class="node"><i class="v"></i><button class="m" aria-label="折叠 B1"></button><svg><use href="#warn"/></svg><svg><use href="#fold"/></svg><span>B1</span></div></td><td></td><td></td><td></td><td></td><td></td><td></td><td>PRO...</td><td></td></tr>
        <tr class="hot"><td><div class="node"><i class="v"></i><i class="v"></i><i class="l"></i><svg><use href="#warn"/></svg><svg><use href="#peck"/></svg><span>PECK_DRILLI...</span></div></td><td><svg><use href="#bit2"/></svg></td><td><svg><use href="#ok"/></svg></td><td><svg><use href="#no"/></svg></td><td></td><td>ZXZ-D1</td><td>中心钻刀</td><td>PECK...</td><td></td></tr>
        <tr><td><div class="node"><i class="v"></i><button class="m" aria-label="折叠 B2"></button><svg><use href="#warn"/></svg><svg><use href="#fold"/></svg><span>B2</span></div></td><td></td><td></td><td></td><td></td><td></td><td></td><td>PRO...</td><td></td></tr>
        <tr class="hot"><td><div class="node"><i class="v"></i><i class="v"></i><i class="t"></i><svg><use href="#warn"/></svg><svg><use href="#peck"/></svg><span>PECK_DRILLI...</span></div></td><td><svg><use href="#bit2"/></svg></td><td><svg><use href="#ok"/></svg></td><td><svg><use href="#no"/></svg></td><td></td><td>D1.6-ZT</td><td>钻刀</td><td>PECK...</td><td></td></tr>
        <tr><td><div class="node"><i class="v"></i><i class="v"></i><i class="l"></i><svg><use href="#warn"/></svg><svg><use href="#peck"/></svg><span>PECK_DRILLI...</span></div></td><td></td><td><svg><use href="#ok"/></svg></td><td><svg><use href="#no"/></svg></td><td></td><td>D1.6-ZT</td><td>钻刀</td><td>PECK...</td><td></td></tr>
        <tr><td><div class="node"><i class="v"></i><button class="m" aria-label="折叠 B3"></button><svg><use href="#warn"/></svg><svg><use href="#fold"/></svg><span>B3</span></div></td><td></td><td></td><td></td><td></td><td></td><td></td><td>PRO...</td><td></td></tr>
        <tr class="sel"><td><div class="node"><i class="v"></i><i class="v"></i><i class="l"></i><svg><use href="#warn"/></svg><svg><use href="#mill"/></svg><span>孔铣_COPY_3</span></div></td><td><svg><use href="#bit"/></svg></td><td><svg><use href="#none"/></svg></td><td><svg><use href="#no"/></svg></td><td></td><td>D1.5-C</td><td>铣刀-5 参数</td><td>孔铣</td><td></td></tr>
        <tr><td><div class="node"><i class="v"></i><button class="m" aria-label="折叠 B4"></button><svg><use href="#warn"/></svg><svg><use href="#fold"/></svg><span>B4</span></div></td><td></td><td></td><td></td><td></td><td></td><td></td><td>PRO...</td><td></td></tr>
        <tr class="hot"><td><div class="node"><i class="v"></i><i class="v"></i><i class="t"></i><svg><use href="#warn"/></svg><svg><use href="#peck"/></svg><span>PECK_DRILLI...</span></div></td><td><svg><use href="#bit"/></svg></td><td><svg><use href="#ok"/></svg></td><td><svg><use href="#no"/></svg></td><td></td><td>D6V90</td><td>铣刀-5 参数</td><td>PECK...</td><td></td></tr>
        <tr><td><div class="node"><i class="v"></i><i class="v"></i><i class="l"></i><svg><use href="#warn"/></svg><svg><use href="#peck"/></svg><span>PECK_DRILLI...</span></div></td><td></td><td><svg><use href="#ok"/></svg></td><td><svg><use href="#no"/></svg></td><td></td><td>D6V90</td><td>铣刀-5 参数</td><td>PECK...</td><td></td></tr>
        <tr><td><div class="node"><i class="v"></i><button class="m" aria-label="折叠 B5"></button><svg><use href="#warn"/></svg><svg><use href="#fold"/></svg><span>B5</span></div></td><td></td><td></td><td></td><td></td><td></td><td></td><td>PRO...</td><td></td></tr>
        <tr class="hot"><td><div class="node"><i class="v"></i><i class="v"></i><i class="l"></i><svg><use href="#warn"/></svg><svg><use href="#mill"/></svg><span>孔铣_COPY_3...</span></div></td><td><svg><use href="#bit"/></svg></td><td><svg><use href="#none"/></svg></td><td><svg><use href="#no"/></svg></td><td></td><td>D1.5-J</td><td>铣刀-5 参数</td><td>孔铣</td><td></td></tr>
        <tr><td><div class="node"><i class="v"></i><button class="m" aria-label="折叠 B6"></button><svg><use href="#warn"/></svg><svg><use href="#fold"/></svg><span>B6</span></div></td><td></td><td></td><td></td><td></td><td></td><td></td><td>PRO...</td><td></td></tr>
        <tr><td><div class="node"><i class="v"></i><i class="v"></i><i class="l"></i><svg><use href="#warn"/></svg><svg><use href="#plan"/></svg><span>2D单向</span></div></td><td></td><td><svg><use href="#ok"/></svg></td><td><svg><use href="#no"/></svg></td><td></td><td>D1.5-J</td><td>铣刀-5 参数</td><td>2D单向</td><td></td></tr>
        <tr><td><div class="node"><i class="v"></i><i class="t"></i><svg><use href="#ok"/></svg><svg><use href="#fold"/></svg><span>B7</span></div></td><td></td><td></td><td></td><td></td><td></td><td></td><td>PRO...</td><td></td></tr>
        <tr><td><div class="node"><i class="v"></i><i class="t"></i><svg><use href="#ok"/></svg><svg><use href="#fold"/></svg><span>B8</span></div></td><td></td><td></td><td></td><td></td><td></td><td></td><td>PRO...</td><td></td></tr>
        <tr><td><div class="node"><i class="v"></i><i class="t"></i><svg><use href="#warn"/></svg><svg><use href="#fold"/></svg><span>B09</span></div></td><td></td><td></td><td></td><td></td><td></td><td></td><td>PRO...</td><td></td></tr>
        <tr><td><div class="node"><i class="v"></i><i class="t"></i><svg><use href="#warn"/></svg><svg><use href="#fold"/></svg><span>B10</span></div></td><td></td><td></td><td></td><td></td><td></td><td></td><td>PRO...</td><td></td></tr>
        <tr><td><div class="node"><i class="v"></i><i class="t"></i><svg><use href="#ok"/></svg><svg><use href="#fold"/></svg><span>B11</span></div></td><td></td><td></td><td></td><td></td><td></td><td></td><td>PRO...</td><td></td></tr>
        <tr><td><div class="node"><i class="v"></i><i class="t"></i><svg><use href="#warn"/></svg><svg><use href="#fold"/></svg><span>B12</span></div></td><td></td><td></td><td></td><td></td><td></td><td></td><td>PRO...</td><td></td></tr>
        <tr><td><div class="node"><i class="v"></i><i class="l"></i><svg><use href="#ok"/></svg><svg><use href="#fold"/></svg><span>B13</span></div></td><td></td><td></td><td></td><td></td><td></td><td></td><td>PRO...</td><td></td></tr>
        <tr><td><div class="node"><button class="m" aria-label="折叠 C"></button><svg><use href="#warn"/></svg><svg><use href="#fold"/></svg><span>C</span></div></td><td></td><td></td><td></td><td></td><td></td><td></td><td>PRO...</td><td></td></tr>
        <tr><td><div class="node"><i class="v"></i><i class="t"></i><svg><use href="#ok"/></svg><svg><use href="#fold"/></svg><span>C1</span></div></td><td></td><td></td><td></td><td></td><td></td><td></td><td>PRO...</td><td></td></tr>
        <tr><td><div class="node"><i class="v"></i><i class="t"></i><svg><use href="#ok"/></svg><svg><use href="#fold"/></svg><span>C2</span></div></td><td></td><td></td><td></td><td></td><td></td><td></td><td>PRO...</td><td></td></tr>
        </tbody>
      </table>
      <div class="vscroll"><svg width="9" height="6"><path d="M1 5l3.500-4L8 5" fill="none" stroke="#444" stroke-width="2"/></svg><i></i><svg width="9" height="6"><path d="M1 1l3.500 4L8 1" fill="none" stroke="#444" stroke-width="2"/></svg></div>
      </div>
      <div class="hscroll"><svg width="6" height="9"><path d="M5 1L1 4.500 5 8" fill="none" stroke="#444" stroke-width="2"/></svg><i></i><svg width="6" height="9"><path d="M1 1l4 3.500L1 8" fill="none" stroke="#444" stroke-width="2"/></svg></div>
    </div>
    <hr>
  </section>

  <section class="view">
    <div class="tabs">
      <a class="tab" href="#"><svg width="16" height="16" fill="none" stroke="#333"><path d="M2 5l5-3v12M2 5v11M10 2h4v13M7 6q3-5 6 0M5 8l3 3"/></svg>发现中心</a>
      <a class="tab on" href="#"><svg width="17" height="16" fill="none" stroke="#fff"><path d="M1 1.500h5v4H1.500v4H6v5H1M9 13q0-6 6-4M15 6v3h-3M16 12q-2 4-6 2"/></svg>C1990-08-007-LZH.prt<svg width="10" height="11" fill="none" stroke="#fff" stroke-width="1.500"><path d="M5 10H1V1h4l3 3v2M4 6h4v4"/></svg><svg width="9" height="9" stroke="#b9d3df" stroke-width="2"><path d="M1 1l7 7M8 1L1 8"/></svg></a>
    </div>
    <div class="canvas">
      <svg class="scene">
        <g transform="translate(354 298) scale(.3333)" stroke-linejoin="round">
          <path d="M78 365L66 510 76 516 1086 614 1106 606 1122 346 1104 464z" fill="#b5b5b5" stroke="#333" stroke-width="2"/>
          <path d="M84 368L76 516 1086 614 1096 465z" fill="#7b7b7b" stroke="#222" stroke-width="2"/>
          <path d="M104 244L1122 346 1106 456 1096 465 84 368 78 355 90 256z" fill="#fff" stroke="#222" stroke-width="3"/>
          <g stroke="#222" stroke-width="3">
            <ellipse cx="131" cy="325" rx="24" ry="16" fill="#d87070"/><ellipse cx="515" cy="363" rx="25" ry="16" fill="#d87070"/>
            <ellipse cx="227" cy="334" rx="19" ry="13" fill="#8d8d8d"/><ellipse cx="371" cy="349" rx="19" ry="13" fill="#8d8d8d"/>
            <ellipse cx="128" cy="381" rx="24" ry="16" fill="none"/><ellipse cx="511" cy="418" rx="24" ry="16" fill="none"/>
            <ellipse cx="609" cy="493" rx="46" ry="29" fill="#fff"/><path d="M603 465l-5 56M627 467l-5 54"/>
            <ellipse cx="729" cy="505" rx="40" ry="31" fill="#fff"/><ellipse cx="921" cy="524" rx="39" ry="31" fill="#fff"/><ellipse cx="1040" cy="535" rx="34" ry="28" fill="#fff"/>
          </g>
          <path d="M118 313v24M126 310v30M138 310v30M146 313v24M502 351v24M510 348v30M522 348v30M530 351v24" stroke="#8e1a20" stroke-width="4"/>
          <path d="M126 310h12v30h-12zM510 348h12v30h-12z" fill="#777"/>
          <path d="M1120 350L1100 520h12z" fill="#e08a1a"/>
          <path d="M1108 500L1092 590l18 0z" fill="#2a7fff"/><path d="M1098 580l16 4-10 38z" fill="#157a2a"/>
          <path d="M1128 344L1150 190" stroke="#2aa040" stroke-width="7"/><path d="M1148 150l8 36q-10 14-18-2z" fill="#1f9c38"/>
          <path d="M1125 346L1137 150" stroke="#0c36a8" stroke-width="7"/>
          <path d="M1125 347L1375 369" stroke="#c23438" stroke-width="4"/><path d="M1372 358l64 18-66 6z" fill="#c8282e"/>
          <path d="M944 474l86 6 68 12-84-3z" fill="#f0a0a0" stroke="#c23438"/>
        </g>
        <text x="713" y="332" fill="#2234e8">ZM</text><text x="716" y="346" fill="#208a30">YM</text>
        <text x="816" y="438" fill="#c8282e">XM</text><text x="669" y="452" fill="#d04a4a">XC</text>
        <text x="727" y="519" fill="#208a30">YC</text><text x="722" y="511" fill="#2234e8">ZC</text>
        <path d="M734 333l3 17q-5 2-8-1z" fill="#0c2fa8"/>
      </svg>
    </div>

    <form class="dialog" aria-label="孔铣" onsubmit="return false">
      <div class="dtitle"><svg width="16" height="16"><use href="#gear"/></svg><h2>孔铣 - [孔铣_COPY_3]</h2><button type="button" aria-label="帮助">?</button><button type="button" aria-label="关闭"><svg width="12" height="12"><path d="M1 1l10 10M11 1L1 11" stroke="#fff" stroke-width="2"/></svg></button></div>
      <div class="dtabs"><button type="button" class="on">主要</button><button type="button">刀具</button><button type="button">进退刀</button><button type="button">选项</button></div>
      <div class="page">
        <h3><i class="dn"></i>几何体</h3>
        <div class="f high"><label for="geo">几何体</label><select id="geo" class="box s117"><option>B</option></select><button type="button" class="ib" aria-label="新建几何体"><svg><use href="#i-geom"/></svg></button><button type="button" class="ib" aria-label="编辑"><svg><use href="#wrench"/></svg></button></div>
        <div class="f deep"><span class="lb">指定特征几何体</span><button type="button" class="ib" aria-label="指定特征"><svg><use href="#hole"/></svg></button><button type="button" class="ib" aria-label="显示"><svg><use href="#eye"/></svg></button></div>
        <div class="f"><label for="top">顶偏置</label><select id="top" class="box s141"><option>距离</option></select></div>
        <div class="f"><label for="topd">距离</label><input id="topd" type="text" value="0.50000"></div>
        <div class="f"><label for="bot">底偏置</label><select id="bot" class="box s141"><option>距离</option></select></div>
        <div class="f"><label for="botd">距离</label><input id="botd" type="text" value="0.00000"></div>
        <hr>
        <h3 class="next"><i class="dn"></i>刀轨设置</h3>
        <div class="f"><label for="mode">切削模式</label><span class="pic"><select id="mode" class="box s141"><option>螺旋</option></select><svg><use href="#spiral"/></svg></span></div>
        <div class="f"><label for="off">离起始直径的偏置距离</label><input id="off" type="text" value="0.00000"><select class="box s63" aria-label="单位"><option>mm</option></select></div>
        <fieldset>
          <h4><i class="dn"></i>轴向</h4>
          <div class="f"><label for="dep">每转深度</label><select id="dep" class="box s141"><option>距离</option></select></div>
          <div class="f"><label for="step">步距</label><input id="step" type="text" value="0.04000"><select class="box s63" aria-label="单位"><option>mm</option></select></div>
          <div class="f"><label for="ax">轴向步距</label><select id="ax" class="box s141"><option>刀路数</option></select></div>
          <div class="f"><label for="pass">刀路数</label><input id="pass" class="num" type="text" value="1"></div>
        </fieldset>
        <fieldset>
          <h4><i class="dn"></i>径向</h4>
          <div class="f"><label for="rad">径向步距</label><select id="rad" class="box s141"><option>恒定</option></select></div>
          <div class="f"><label for="max">最大距离</label><input id="max" class="long" type="text" value="50.00000"><select class="box s63" aria-label="单位"><option>%刀具直径</option></select></div>
        </fieldset>
        <div class="f"><span class="lb">切削参数</span><button type="button" class="ib" aria-label="切削参数"><svg><use href="#i-cutp"/></svg></button></div>
        <div class="f"><span class="lb">非切削移动</span><button type="button" class="ib" aria-label="非切削移动"><svg><use href="#i-hatch"/></svg></button></div>
        <button type="button" class="expand"><i class="rt"></i>更多</button>
        <hr>
      </div>
      <div class="actions">
        <h3><i class="dn"></i>操作</h3>
        <div class="abar"><button type="button" class="ib" aria-label="生成"><svg><use href="#i-gen"/></svg></button><button type="button" class="ib" aria-label="重播"><svg><use href="#i-redo"/></svg></button><button type="button" class="ib" aria-label="确认"><svg><use href="#i-chk"/></svg></button><button type="button" class="ib" aria-label="列表"><svg><use href="#i-preport"/></svg></button><button type="button" class="ib gold" aria-label="选择刀轨"><svg><use href="#i-pick"/></svg></button></div>
      </div>
      <div class="fold"><i class="up"></i></div>
      <div class="dbtns"><button type="submit" class="pri">确定</button><button type="button">取消</button></div>
    </form>
  </section>

  <nav class="side" aria-label="常用命令">
    <button aria-label="确认刀轨"><svg><use href="#i-chk"/></svg></button>
    <button aria-label="测量"><svg><use href="#ruler"/></svg></button>
    <button aria-label="生成刀轨"><svg><use href="#i-gen"/></svg></button>
    <button aria-label="隐藏"><svg><use href="#noeye"/></svg></button>
    <button aria-label="适合窗口"><svg><use href="#fit"/></svg></button>
    <button aria-label="收藏"><svg><use href="#star"/></svg></button>
    <button aria-label="显示和隐藏"><svg><use href="#i-eyes"/></svg></button>
    <button aria-label="坐标"><svg><use href="#csys"/></svg></button>
    <button aria-label="NC 助理"><svg><use href="#i-nc"/></svg></button>
    <button aria-label="定向"><svg><use href="#csysbox"/></svg></button>
    <hr>
  </nav>
</main>

<aside class="alert">
  <i class="grip"></i>
  <div class="msg">
    <h3>警报</h3>
    <p><svg width="14" height="14"><path d="M0 0h14v14H0z" fill="#d8192a"/><path d="M3 3l8 8M11 3l-8 8" stroke="#fff" stroke-width="1.500"/></svg>由于检测到过切，某些特征未切削。</p>
    <label><input type="checkbox" checked>显示几何体</label>
  </div>
  <button aria-label="关闭警报"><svg width="12" height="12"><path d="M1 1l10 10M11 1L1 11" stroke="#e01a24" stroke-width="3"/></svg></button>
</aside>
<p class="stamp"><span>UG</span>爱好者论坛<span> WWW.UGSNX.COM</span></p>
</div>
</body>
</html>
```
FILE: styles.css
```css
:root {
  --teal: #005f87;
  --link: #0f6683;
  --lit: #cce5ea;
  --line: #d5d5d5;
}
* { box-sizing: border-box; }
body {
  margin: 0;
  font: 12px/16px "Open Sans", "Noto Sans CJK SC", sans-serif;
  color: #222;
  background: #fff;
}
button, select, input { font: inherit; color: inherit; margin: 0; border-radius: 0; }
button { background: none; border: 0; padding: 0; }
svg { display: block; flex: none; }
i { font-style: normal; }
h2, h3, h4, p { margin: 0; font-weight: 400; }
a { color: inherit; text-decoration: none; }
.sprite { position: absolute; width: 0; height: 0; }
.app { position: relative; display: flex; flex-direction: column; height: 100vh; overflow: hidden; }
.lit { background-color: var(--lit); }
.off { color: #b9b9b9; }
.off svg { filter: grayscale(1); opacity: .35; }
.dn { display: block; flex: none; width: 0; border: 3px solid transparent; border-top: 4px solid #111; border-bottom: 0; }

/* header */
.top { flex: none; background: linear-gradient(90deg, #00678d, #0078a3); color: #fff; }
.titlebar { display: flex; align-items: center; height: 30px; margin-top: -12px; padding: 0 0 0 2px; }
.nx { font: bold 22px/24px "Liberation Sans", sans-serif; width: 46px; }
.apptitle { flex: 1; padding-left: 616px; }
.brand { font: bold 13px/16px "Liberation Sans", sans-serif; margin-right: 20px; }
.win { width: 24px; padding: 0 6px; }
.menu { display: flex; align-items: center; height: 26px; padding-right: 2px; font-size: 13px; }
.menu a { padding: 0 16px; line-height: 20px; height: 24px; white-space: nowrap; border-bottom: 2px solid transparent; }
.menu a.file { padding: 0 26px 0 18px; }
.menu a.ext { padding: 0 17px; }
.menu a.on { color: #f3d060; border-color: #f3cf5c; }
.find { display: flex; align-items: center; width: 178px; height: 21px; margin: 0 10px 4px auto; background: #fff; border: 1px solid #888; font-size: 11px; }
.find input { flex: 1; min-width: 0; border: 0; padding: 0 2px; background: none; outline: 0; }
.find input::placeholder { color: #a5a5a5; }
.mb { width: 25px; margin-bottom: 4px; padding: 0 4px; }
.bang { width: 1px; height: 14px; margin: 0 9px 0 14px; background: #4fb0cf; }

/* ribbon */
.ribbon { flex: none; display: flex; height: 94px; border-bottom: 1px solid var(--line); font-size: 11px; line-height: 16px; }
.group { position: relative; display: flex; flex-direction: column; padding: 2px 4px 0 7px; }
.group:nth-child(1) { padding-left: 8px; }
.group:nth-child(2) { padding-right: 0; }
.group:nth-child(4) { padding-right: 2px; }
.group:nth-child(5) { padding-left: 9px; padding-right: 2px; }
.group::after { content: ""; position: absolute; right: 0; top: 5px; bottom: 4px; width: 1px; background: var(--line); }
.tools { display: flex; height: 75px; }
.tools.low { padding-top: 8px; height: 84px; }
.rb { display: flex; flex-direction: column; align-items: center; width: 52px; padding-top: 3px; white-space: nowrap; background-clip: padding-box; border-right: 1px solid transparent; }
.rb.wide { width: 64px; }
.rb.mid { width: 56px; }
.rb.slim { width: 48px; }
.rb svg { width: 32px; height: 32px; margin-bottom: 4px; }
.rb .dn { margin-top: 4px; }
.stack { display: flex; flex-direction: column; align-items: center; width: 36px; padding-top: 7px; gap: 12px; }
.stack svg { width: 24px; height: 24px; }
.stack.duo { gap: 6px; padding-top: 3px; }
.stack .lit { padding: 4px 3px; }
.stack.tri { gap: 7px; padding-top: 3px; width: 34px; margin-left: 8px; }
.stack.tri svg { width: 16px; height: 16px; }
.dn.aside { margin: 52px 2px 0; }
.cap { display: flex; align-items: center; height: 14px; color: var(--link); }
.cap span { flex: 1; text-align: center; }
.cap .dn { margin-right: 5px; }
.group:nth-child(2) .dn, .group:nth-child(5) .dn { margin-right: 8px; }
.group .rb .dn, .group:nth-child(n) .rb .dn { margin-right: 0; }
.ribbon .dn.end { margin: 81px 6px 0 auto; }

/* selection bar */
.selbar { flex: none; display: flex; align-items: center; gap: 5px; height: 28px; padding-left: 9px; border-bottom: 1px solid #9a9a9a; font-size: 11px; }
.mainmenu { display: flex; align-items: center; gap: 8px; margin-right: 2px; white-space: nowrap; }
.vr { width: 1px; height: 20px; background: var(--line); }
.vr.far { margin: 0 8px 0 26px; }
.vr.mid { margin: 0 4px; }
.selbar .box { height: 23px; }
.b1 { width: 149px; }
.b2 { width: 156px; }
.tb { width: 20px; height: 22px; padding: 1px 0; }
.tb svg { width: 20px; height: 20px; }
.tb.wide { margin: 0 2px; }
.tb.lit { width: 22px; padding: 1px; margin: 0 -1px; }
.selbar .dn.end { margin: 6px 6px 0 auto; }
.box {
  appearance: none;
  height: 25px;
  padding: 0 19px 0 2px;
  border: 1px solid #6e6e6e;
  outline: 0;
  color: #222;
  background:
    linear-gradient(45deg, transparent 50%, #111 50%) right 9px center / 4px 4px no-repeat,
    linear-gradient(135deg, #111 50%, transparent 50%) right 5px center / 4px 4px no-repeat,
    #fff;
}

/* work area */
.work { flex: 1; display: flex; min-height: 0; }
.rail { flex: none; width: 30px; background: #dcdcdc; border-right: 1px solid #aaa; }
.rail button { display: flex; align-items: center; justify-content: center; width: 30px; height: 42px; padding-right: 1px; padding-left: 3px; }
.rail svg { width: 24px; height: 24px; }
.rail .first { height: 26px; margin-bottom: 16px; padding: 0 4px 0 0; color: #333; }
.rail .first svg { width: 13px; height: 13px; }
.rail .on { background: #fff; }
.rail .sp { margin-top: 12px; }
.navpanel { flex: none; display: flex; flex-direction: column; padding: 0 16px 5px 10px; border-right: 1px solid #aaa; }
.navpanel header { display: flex; align-items: center; justify-content: space-between; height: 30px; margin-bottom: 2px; }
.navpanel h2 { font-size: 12px; }
.navpanel header button { width: 11px; height: 11px; border: 1px solid #111; border-top-width: 2px; }
.navpanel > hr { height: 1px; width: 100%; margin: 5px 0 0; border: 0; background: #bbb; }
.navtools { display: flex; gap: 2px; margin-bottom: 5px; }
.navtools button { width: 32px; height: 32px; }
.navtools svg { width: 30px; height: 30px; margin: auto; }
.navtools .framed { border: 1px solid #777; margin-left: 2px; }
.navtools .pale { border-color: #bbb; }
.frame { flex: 1; min-height: 0; display: flex; flex-direction: column; margin-left: 2px; padding: 0 0 1px 1px; border: 1px solid #cfcfcf; }
.rows { position: relative; flex: 1; min-height: 0; overflow: hidden; }
table { width: 614px; table-layout: fixed; border-collapse: separate; border-spacing: 0; }
.c200 { width: 200px; } .c50 { width: 50px; } .c35 { width: 35px; } .c60 { width: 60px; } .c106 { width: 106px; } .c48 { width: 48px; } .c16 { width: 15px; }
th { height: 21px; padding: 2px 0 0 6px; text-align: left; font-weight: 400; background: #efefef; border-right: 1px solid #d0d0d0; border-bottom: 1px solid #d0d0d0; overflow: hidden; white-space: nowrap; }
td { height: 20px; padding: 0 0 0 4px; line-height: 19px; border-right: 1px solid #e4e4e4; border-bottom: 1px solid #e8e8e8; overflow: hidden; white-space: nowrap; }
tbody tr:nth-child(even) { background: #f9f9f9; }
td svg { width: 15px; height: 15px; }
td:nth-child(n+3) svg { margin-left: 1px; }
td:first-child { padding: 0; border-right: 1px solid #000; border-bottom: 0; }
.hot { color: #6a66dd; }
.sel td:not(:first-child), .sel .node span { background: var(--lit); }
.node { display: flex; align-items: center; height: 20px; padding-left: 19px; }
.node i, .node .m { flex: none; width: 19px; height: 20px; }
.v, .m { background: repeating-linear-gradient(#999 0 1px, transparent 1px 2px) 9px 0 / 1px 20px no-repeat; }
.t { background: repeating-linear-gradient(#999 0 1px, transparent 1px 2px) 9px 0 / 1px 20px no-repeat, repeating-linear-gradient(90deg, #999 0 1px, transparent 1px 2px) 9px 10px / 9px 1px no-repeat; }
.l { background: repeating-linear-gradient(#999 0 1px, transparent 1px 2px) 9px 0 / 1px 10px no-repeat, repeating-linear-gradient(90deg, #999 0 1px, transparent 1px 2px) 9px 10px / 9px 1px no-repeat; }
.m { padding: 1px 0 0 5px; }
.m::before { content: ""; display: block; width: 9px; height: 9px; border: 1px solid #c4c4c4; background: linear-gradient(#222, #222) center / 5px 1px no-repeat #fff; }
.node svg { width: 16px; height: 16px; }
.node span { flex: 1; height: 20px; padding-left: 3px; border-bottom: 1px solid #e8e8e8; }
.vscroll { position: absolute; right: 0; top: 21px; bottom: 0; width: 15px; display: flex; flex-direction: column; align-items: center; justify-content: space-between; padding: 7px 0 5px; background: #f0f0f0; }
.vscroll i { width: 15px; height: 40%; margin-top: 178px; background: #cdcdcd; }
.hscroll { display: flex; align-items: center; height: 16px; padding: 0 22px 0 5px; background: #f0f0f0; }
.hscroll i { width: 82px; height: 16px; margin: 0 auto 0 6px; background: #cdcdcd; }

/* graphics window */
.view { position: relative; flex: 1; min-width: 0; display: flex; flex-direction: column; }
.tabs { display: flex; height: 26px; border-bottom: 2px solid var(--teal); }
.tab { display: flex; gap: 4px; padding: 4px 22px 0 6px; }
.tab.on { background: var(--teal); color: #fff; padding: 4px 6px 0; }
.tab.on svg:nth-of-type(2) { margin: 3px 0 0 6px; }
.tab.on svg:last-child { margin: 4px 0 0 3px; }
.canvas { flex: 1; min-height: 0; background: #d4d4d4; }
.scene { width: 100%; height: 100%; font: 13px "Liberation Sans", sans-serif; }

/* dialog */
.dialog { position: absolute; left: 0; top: 17px; width: 328px; background: #f0f0f0; }
.dtitle { display: flex; align-items: center; height: 24px; padding: 0 3px 0 6px; background: var(--teal); color: #fff; }
.dtitle h2 { flex: 1; padding-left: 7px; font-size: 14px; line-height: 20px; }
.dtitle button { width: 24px; font-weight: 700; font-size: 16px; padding-left: 6px; }
.dtabs { display: flex; align-items: flex-end; height: 38px; padding-left: 10px; }
.dtabs button { height: 29px; width: 52px; background: #f0f0f0; border: 1px solid #cfcfcf; border-left: 0; border-bottom: 0; }
.dtabs .on { position: relative; z-index: 1; width: 56px; height: 31px; margin-bottom: -1px; background: #fff; border-left: 1px solid #cfcfcf; color: var(--link); }
.page { margin: 0 10px 1px; padding: 0 13px; background: #fff; border: 1px solid #cfcfcf; }
h3 { display: flex; align-items: center; gap: 8px; height: 32px; font-size: 14px; color: var(--link); }
h3 .dn, h4 .dn { border: 4px solid transparent; border-top: 5px solid var(--link); border-bottom: 0; }
.page h3 { margin-left: -1px; }
.page h3.next { height: 34px; }
.f { display: flex; gap: 2px; margin-bottom: 2px; }
.f label, .f .lb { flex: 1; align-self: center; }
.f.high label { align-self: flex-start; line-height: 26px; }
.f.deep .lb { padding-top: 6px; }
.box.s117 { width: 117px; } .box.s141 { width: 141px; } .box.s63 { width: 63px; }
.f .box { padding-left: 4px; }
.f input { width: 82px; height: 23px; padding: 2px 3px 0 21px; border: 1px solid #6e6e6e; outline: 0; background: #fff; font: 15px/19px "Liberation Mono", monospace; }
.f input.long { padding-left: 12px; }
.f input.num { padding: 2px 6px 0; text-align: right; }
.ib { display: flex; align-items: center; justify-content: center; width: 32px; height: 32px; background: #fff; border: 1px solid #6e6e6e; }
.ib svg { width: 25px; height: 25px; }
.page hr { height: 1px; margin: 8px -8px 0; border: 0; background: #cfcfcf; }
.pic { position: relative; }
.pic svg { position: absolute; left: 5px; top: 7px; width: 17px; height: 12px; }
.f .pic .box { padding-left: 21px; }
.page fieldset { margin: 0 0 2px; padding: 0 8px 7px; min-width: 0; background: #f0f0f0; border: 1px solid #dcdcdc; }
h4 { display: flex; align-items: center; gap: 8px; height: 29px; padding-bottom: 6px; font-size: 12px; color: var(--link); }
.expand { display: flex; align-items: center; gap: 10px; width: 100%; height: 24px; padding-left: 9px; background: #f0f0f0; border: 1px solid #dcdcdc; color: var(--link); }
.rt { border: 4px solid transparent; border-left: 5px solid var(--link); border-right: 0; }
.page .expand + hr { margin-bottom: 6px; }
.actions { margin: 0 10px; padding: 0 9px 8px 7px; background: #fff; border-bottom: 1px solid #cfcfcf; }
.actions h3 { height: 29px; padding-bottom: 6px; }
.abar { display: flex; gap: 2px; padding-left: 80px; }
.gold { margin-left: auto; background: #fddf73; border-color: #fddf73; }
.fold { display: flex; justify-content: center; align-items: flex-end; height: 21px; margin: 0 6px 9px; padding-bottom: 4px; border-bottom: 1px solid #d5d5d5; }
.up { border: 5px solid transparent; border-bottom: 5px solid #111; border-top: 0; }
.dbtns { display: flex; justify-content: flex-end; gap: 5px; padding: 0 16px 8px; }
.dbtns button { width: 54px; height: 24px; border: 1px solid var(--teal); background: #fff; color: var(--teal); }
.dbtns .pri { background: var(--teal); color: #fff; }

/* right command strip */
.side { flex: none; width: 35px; padding: 9px 6px 0 5px; }
.side button { display: flex; height: 32px; align-items: center; }
.side svg { width: 24px; height: 24px; }
.side hr { margin: 4px 0 0; border: 0; height: 1px; background: #d0d0d0; }

/* alert */
.alert { position: absolute; right: 0; bottom: 0; display: flex; align-items: flex-start; width: 290px; height: 86px; padding: 5px 5px 4px 3px; background: #f0f0f0; border-top: 1px solid #aaa; }
.grip { width: 7px; height: 76px; margin-right: 9px; background: radial-gradient(circle, #aaa 1px, transparent 2px) 0 0 / 4px 4px; }
.msg { flex: 1; height: 76px; padding: 2px 9px; background: #fff; margin-right: 6px; }
.msg h3 { height: 18px; }
.msg p { display: flex; align-items: center; gap: 11px; height: 30px; white-space: nowrap; }
.msg label { display: flex; align-items: center; gap: 15px; height: 16px; padding-left: 24px; }
.msg input { appearance: none; position: relative; width: 13px; height: 13px; border: 1px solid #222; background: #fff; }
.msg input::after { content: ""; position: absolute; left: 3px; top: 1px; width: 6px; height: 4px; border: solid #222; border-width: 0 0 1px 1px; transform: rotate(-45deg); }
.alert > button { display: grid; place-items: center; width: 24px; height: 24px; border: 1px solid #777; }
.stamp { position: absolute; right: 5px; bottom: 0; font: 16px/20px "Noto Sans CJK SC", sans-serif; font-weight: 300; color: #777; white-space: pre; }
.stamp span { font: 13px/20px "Liberation Mono", monospace; }
```
